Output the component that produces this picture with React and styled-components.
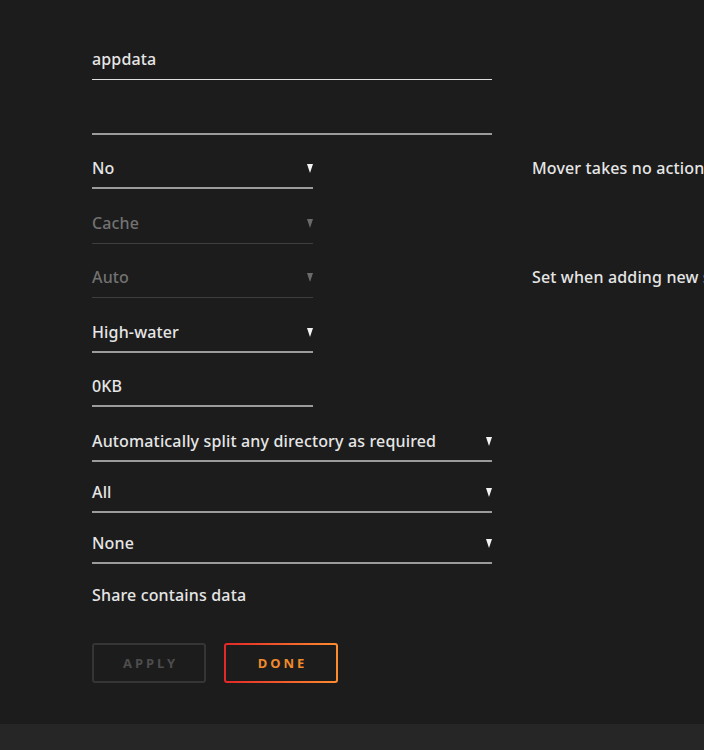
import React from "react";
import styled, { createGlobalStyle, css } from "styled-components";

const Global = createGlobalStyle`
  html, body {
    margin: 0;
    padding: 0;
    background: #1c1c1c;
    overflow: hidden;
  }
  body {
    font-family: "Noto Sans", "Open Sans", sans-serif;
    color: #e4e4e4;
  }
`;

const Page = styled.div`
  width: 704px;
  height: 750px;
  display: flex;
  flex-direction: column;
  overflow: hidden;
`;

const Main = styled.main`
  flex: 1;
  padding: 47px 0 0 92px;
  display: flex;
  flex-direction: column;
`;

const Footer = styled.footer`
  height: 26px;
  background: #262626;
`;

const Row = styled.div`
  display: grid;
  grid-template-columns: 400px max-content;
  column-gap: 40px;
  height: ${(p) => p.$h || 54.5}px;
  white-space: nowrap;
`;

const textStyle = css`
  font-size: 16px;
  line-height: 24px;
  font-weight: 500;
  letter-spacing: 0.15px;
`;

const Field = styled.div`
  width: ${(p) => (p.$narrow ? 221 : 400)}px;
  height: 33px;
  box-sizing: border-box;
  padding-bottom: 8px;
  border-bottom: ${(p) =>
    p.$focus ? "1px solid #dedede" : p.$disabled ? "1px solid #3e3e3e" : "2px solid #9b9b9b"};
  display: flex;
  align-items: flex-start;
  justify-content: space-between;
  ${textStyle}
  color: ${(p) => (p.$disabled ? "#727272" : "#e6e6e6")};
`;

const Arrow = styled.span`
  width: 0;
  height: 0;
  margin: 8px 0 0 0;
  border-left: 3.5px solid transparent;
  border-right: 3.5px solid transparent;
  border-top: 9px solid ${(p) => (p.$disabled ? "#6a6a6a" : "#f2f2f2")};
`;

const Desc = styled.div`
  ${textStyle}
  color: #e6e6e6;
`;

const Note = styled.div`
  ${textStyle}
  color: #e6e6e6;
`;

const Buttons = styled.div`
  display: flex;
  gap: 18px;
  margin-top: 36px;
`;

const Button = styled.button`
  width: 114px;
  height: 40px;
  box-sizing: border-box;
  border-radius: 3px;
  font-family: "Noto Sans", sans-serif;
  font-weight: 700;
  font-size: 13px;
  letter-spacing: 3px;
  padding: 0 0 0 3px;
  cursor: pointer;
  ${(p) =>
    p.$primary
      ? css`
          border: 2px solid transparent;
          background:
            linear-gradient(#1c1c1c, #1c1c1c) padding-box,
            linear-gradient(90deg, #e22828, #ff8c2f) border-box;
          color: #f08a2c;
        `
      : css`
          border: 2px solid #353535;
          background: #1c1c1c;
          color: #4d4d4d;
        `}
`;

const Select = ({ value, narrow, disabled }) => (
  <Field $narrow={narrow} $disabled={disabled}>
    <span>{value}</span>
    <Arrow $disabled={disabled} />
  </Field>
);

export default function App() {
  return (
    <Page>
      <Global />
      <Main>
        <Row>
          <Field $focus>appdata</Field>
        </Row>
        <Row>
          <Field />
        </Row>
        <Row>
          <Select narrow value="No" />
          <Desc>Mover takes no action on this share.</Desc>
        </Row>
        <Row>
          <Select narrow disabled value="Cache" />
        </Row>
        <Row>
          <Select narrow disabled value="Auto" />
          <Desc>Set when adding new shares.</Desc>
        </Row>
        <Row>
          <Select narrow value="High-water" />
        </Row>
        <Row>
          <Field $narrow>0KB</Field>
        </Row>
        <Row $h={51}>
          <Select value="Automatically split any directory as required" />
        </Row>
        <Row $h={51.5}>
          <Select value="All" />
        </Row>
        <Row $h={52}>
          <Select value="None" />
        </Row>
        <Note>Share contains data</Note>
        <Buttons>
          <Button>APPLY</Button>
          <Button $primary>DONE</Button>
        </Buttons>
      </Main>
      <Footer />
    </Page>
  );
}
